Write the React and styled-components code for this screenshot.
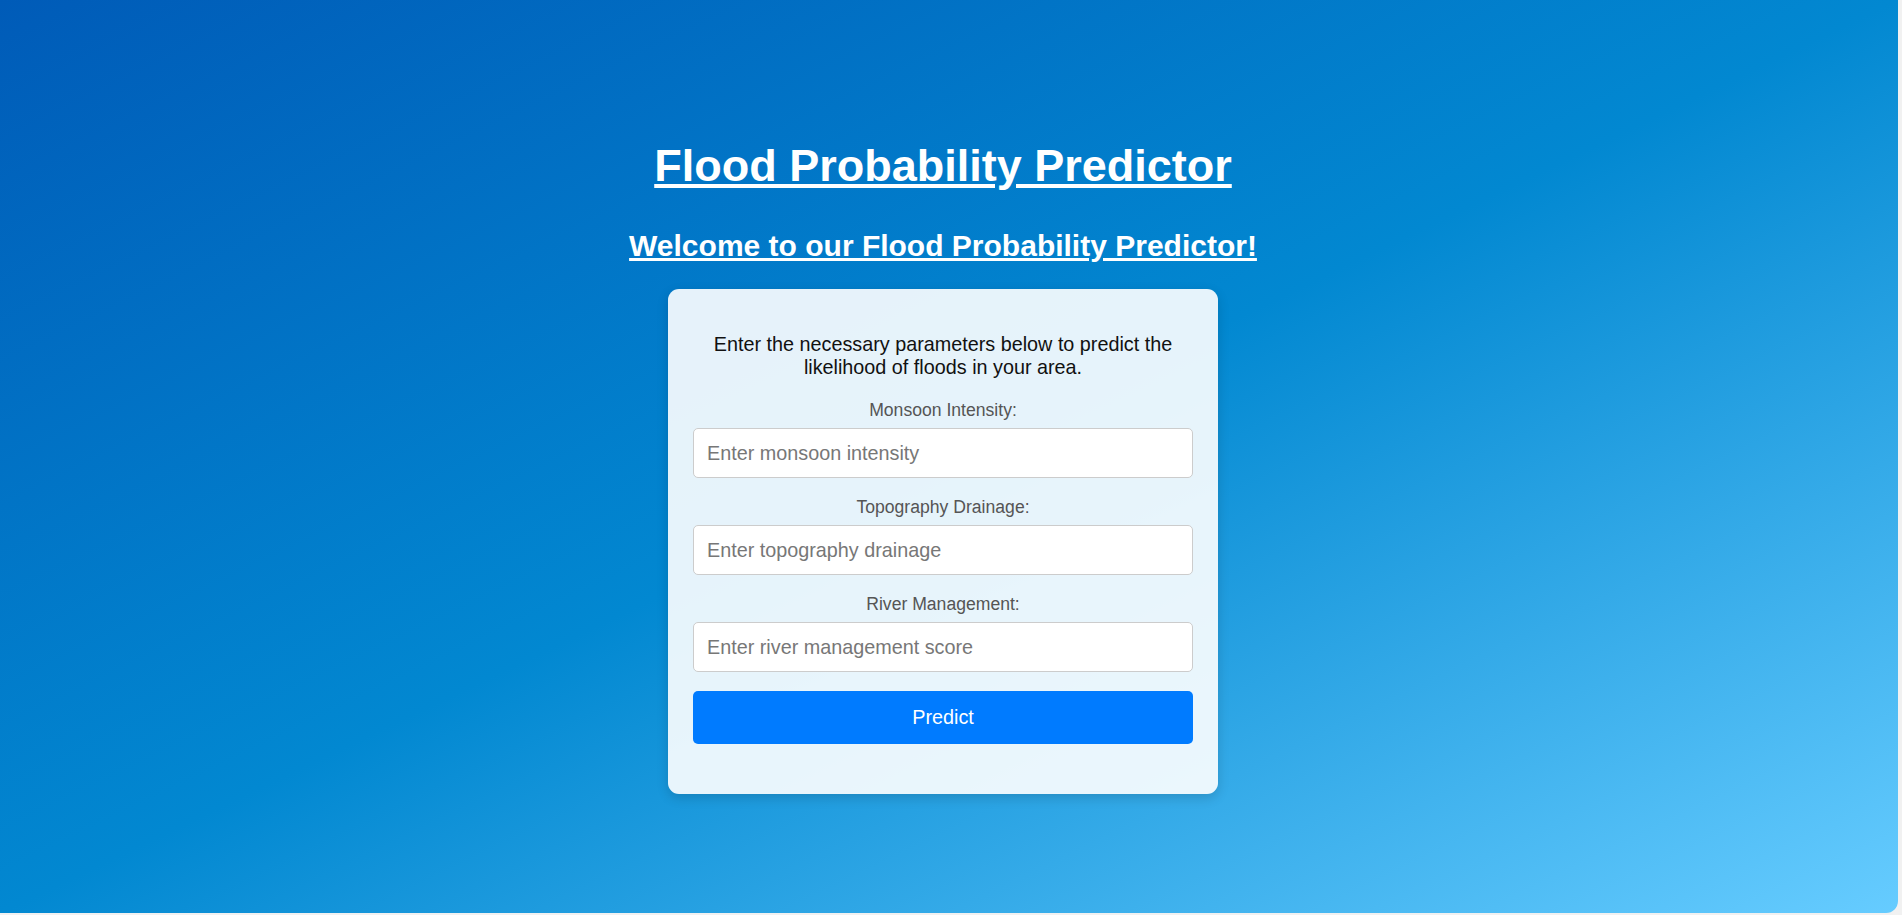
import React, { useState } from "react";
import styled, { createGlobalStyle } from "styled-components";

const GlobalStyle = createGlobalStyle`
    html, body {
        margin: 0;
        padding: 0;
        background: #f1f1f1;
        font-family: "Liberation Sans", Arial, sans-serif;
    }
    * {
        box-sizing: border-box;
    }
`

const Page = styled.div`
    width: calc(100% - 4px);
    height: 913px;
    background: linear-gradient(to bottom right, #005bb8 0%, #0288d1 50%, #66ccff 100%);
    border-bottom-right-radius: 12px;
    display: flex;
    flex-direction: column;
    align-items: center;
    padding: 140px 12px 0 0;
`

const Title = styled.h1`
    margin: 0;
    font-size: 45px;
    line-height: 52px;
    font-weight: bold;
    color: #fff;
    text-decoration: underline;
    text-underline-offset: 3px;
`

const SubTitle = styled.h2`
    margin: 37px 0 0;
    font-size: 30px;
    line-height: 34px;
    font-weight: bold;
    color: #fff;
    text-decoration: underline;
    text-underline-offset: 2px;
`

const Card = styled.form`
    margin-top: 26px;
    width: 550px;
    padding: 25px 25px 50px;
    background: rgba(255, 255, 255, 0.9);
    border-radius: 11px;
    box-shadow: 0 4px 12px rgba(0, 0, 0, 0.15);
    display: flex;
    flex-direction: column;
    align-items: stretch;
    text-align: center;
`

const Intro = styled.p`
    margin: 19px 0 21px;
    font-size: 19.8px;
    line-height: 23px;
    color: #111;
`

const Label = styled.label`
    display: block;
    font-size: 17.6px;
    line-height: 20px;
    color: #555;
    margin-top: ${props => (props.first ? "0" : "19px")};
`

const Input = styled.input`
    display: block;
    width: 100%;
    height: 50px;
    margin-top: 8px;
    padding: 0 13px;
    font-family: "Liberation Sans", Arial, sans-serif;
    font-size: 19.8px;
    line-height: 23px;
    color: #333;
    background: #fff;
    border: 1px solid #ccc;
    border-radius: 5px;
    outline: none;
    &::placeholder {
        color: #777;
    }
`

const Button = styled.button`
    margin-top: 19px;
    width: 100%;
    height: 53px;
    padding: 0;
    font-family: "Liberation Sans", Arial, sans-serif;
    font-size: 19.8px;
    line-height: 23px;
    color: #fff;
    background: #007bff;
    border: none;
    border-radius: 5px;
    cursor: pointer;
`

const fields = [
    { id: "monsoon", label: "Monsoon Intensity:", placeholder: "Enter monsoon intensity" },
    { id: "drainage", label: "Topography Drainage:", placeholder: "Enter topography drainage" },
    { id: "river", label: "River Management:", placeholder: "Enter river management score" },
]

const App = () => {
    const [values, setValues] = useState({ monsoon: "", drainage: "", river: "" })
    const change = (id, v) => setValues({ ...values, [id]: v })

    return (
        <>
            <GlobalStyle />
            <Page>
                <Title>Flood Probability Predictor</Title>
                <SubTitle>Welcome to our Flood Probability Predictor!</SubTitle>
                <Card onSubmit={e => e.preventDefault()}>
                    <Intro>Enter the necessary parameters below to predict the likelihood of floods in your area.</Intro>
                    {fields.map((f, i) => (
                        <div key={f.id}>
                            <Label htmlFor={f.id} first={i === 0}>{f.label}</Label>
                            <Input
                                id={f.id}
                                type="text"
                                placeholder={f.placeholder}
                                value={values[f.id]}
                                onChange={e => change(f.id, e.target.value)}
                            />
                        </div>
                    ))}
                    <Button type="submit">Predict</Button>
                </Card>
            </Page>
        </>
    )
}

export default App;
